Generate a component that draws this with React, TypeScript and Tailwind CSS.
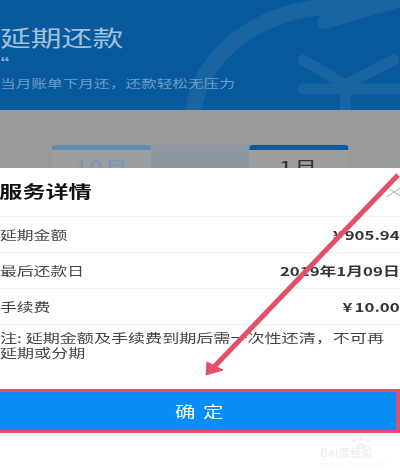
export default function App() {
  const rows = [
    { label: "延期金额", cur: "¥", value: "905.94" },
    { label: "最后还款日", cur: "", value: "2019年1月09日" },
    { label: "手续费", cur: "¥", value: "10.00" },
  ];
  return (
    <div className="relative w-[400px] h-[470px] overflow-hidden bg-white font-['Noto_Sans_CJK_SC','Noto_Sans',sans-serif] blur-[0.35px]">
      <div className="w-[286px] h-[470px] origin-top-left scale-x-[1.4] flex flex-col">
        <div className="relative h-[110px] bg-[#085a9e] overflow-hidden shrink-0 pt-[21px]">
          <svg className="absolute left-0 top-0 w-[286px] h-[110px]" viewBox="0 0 400 110" preserveAspectRatio="none" fill="none" stroke="#1a64a1">
            <path d="M193 112C200 55 255 12 330 6L400 -4" strokeWidth="16" />
            <path d="M324 22L400 0" strokeWidth="14" strokeLinecap="round" />
            <path d="M303 60L345 85L393 60" strokeWidth="11" strokeLinecap="round" />
            <path d="M303 89H400M345 85V112" strokeWidth="11" strokeLinecap="round" />
          </svg>
          <div className="relative text-[22px] leading-[30px] text-[#a4bfd8] whitespace-nowrap">延期还款</div>
          <div className="relative font-['Liberation_Sans',sans-serif] text-[14px] leading-[12px] h-[12px] text-[#8fb0cc] mt-[5px] font-bold">“</div>
          <div className="relative text-[11.2px] leading-[16px] text-[#6f9cc5] mt-[7px] whitespace-nowrap">当月账单下月还，还款轻松无压力</div>
        </div>
        <div className="h-[58px] bg-[#999999] shrink-0 overflow-hidden pt-[35px] pl-[37px]">
          <div className="flex w-[212px] h-[23px] bg-[#8e98a2]">
            <div className="w-[71px] h-[23px] overflow-hidden bg-[#9e9e9e] rounded-t-[3px] border-t-[5px] border-[#5f8db1] text-center text-[#6c9ac2] text-[17px] tracking-[1px] leading-[34px]">10月</div>
            <div className="flex-1 mt-[4px] bg-[#8e98a2]" />
            <div className="w-[71px] h-[23px] overflow-hidden bg-[#9e9e9e] rounded-t-[3px] border-t-[5px] border-[#085a9e] text-center text-[#333333] text-[17px] tracking-[1px] leading-[34px]">1月</div>
          </div>
        </div>
        <div className="flex-1 flex flex-col bg-white">
          <div className="h-[49px] flex items-center justify-between border-b border-[#f2f2f2]">
            <span className="text-[16.5px] font-bold text-[#111111] ml-[-0.5px] mt-[-1px] leading-none">服务详情</span>
            <svg width="13" height="14" viewBox="0 0 13 14" className="mr-[-2px]" fill="none" stroke="#a8a8a8" strokeWidth="0.8"><path d="M1 12L12 2M1 2L12 12" /></svg>
          </div>
          {rows.map((r) => (
            <div key={r.label} className="h-[36px] flex items-center justify-between border-b border-[#f2f2f2] text-[12px]">
              <span className="text-[#444444]">{r.label}</span>
              <span className="font-bold text-[#333333] mr-[0.5px] flex items-center gap-[1.5px]">
                {r.cur && <span>{r.cur}</span>}
                <span>{r.value}</span>
              </span>
            </div>
          ))}
          <p className="text-[12.2px] leading-[15px] text-[#444444] mt-[6px] w-[280px]">注: 延期金额及手续费到期后需一次性还清，不可再延期或分期</p>
          <div className="mt-[28px] ml-[-4px] h-[44px] pl-[8px] border-[3px] border-[#e0506a] bg-[#0a8ef5] flex items-center justify-center text-white text-[14.6px] tracking-[5.4px]">确定</div>
        </div>
      </div>
      <svg className="absolute left-0 top-0" width="400" height="470" viewBox="0 0 400 470" fill="none">
        <path d="M398 175L213 368" stroke="#e2506a" strokeWidth="5" />
        <path d="M206 375L207 362L223 370Z" fill="#e2506a" stroke="#e2506a" strokeWidth="1" />
        <g fill="#f3f3f3">
          <circle cx="354" cy="441" r="2" /><circle cx="361" cy="439" r="2" /><circle cx="368" cy="441" r="2" /><ellipse cx="361" cy="446" rx="5" ry="3" />
        </g>
      </svg>
      <div className="absolute left-[320px] top-[446px] text-[11px] leading-[12px] text-[#efefef] whitespace-nowrap font-bold tracking-[0.5px]">Bai度经验</div>
      <div className="absolute left-[320px] top-[459px] text-[7px] leading-[8px] text-[#f5f5f5] whitespace-nowrap tracking-[0.5px]">jingyan.baidu.com</div>
    </div>
  );
}
